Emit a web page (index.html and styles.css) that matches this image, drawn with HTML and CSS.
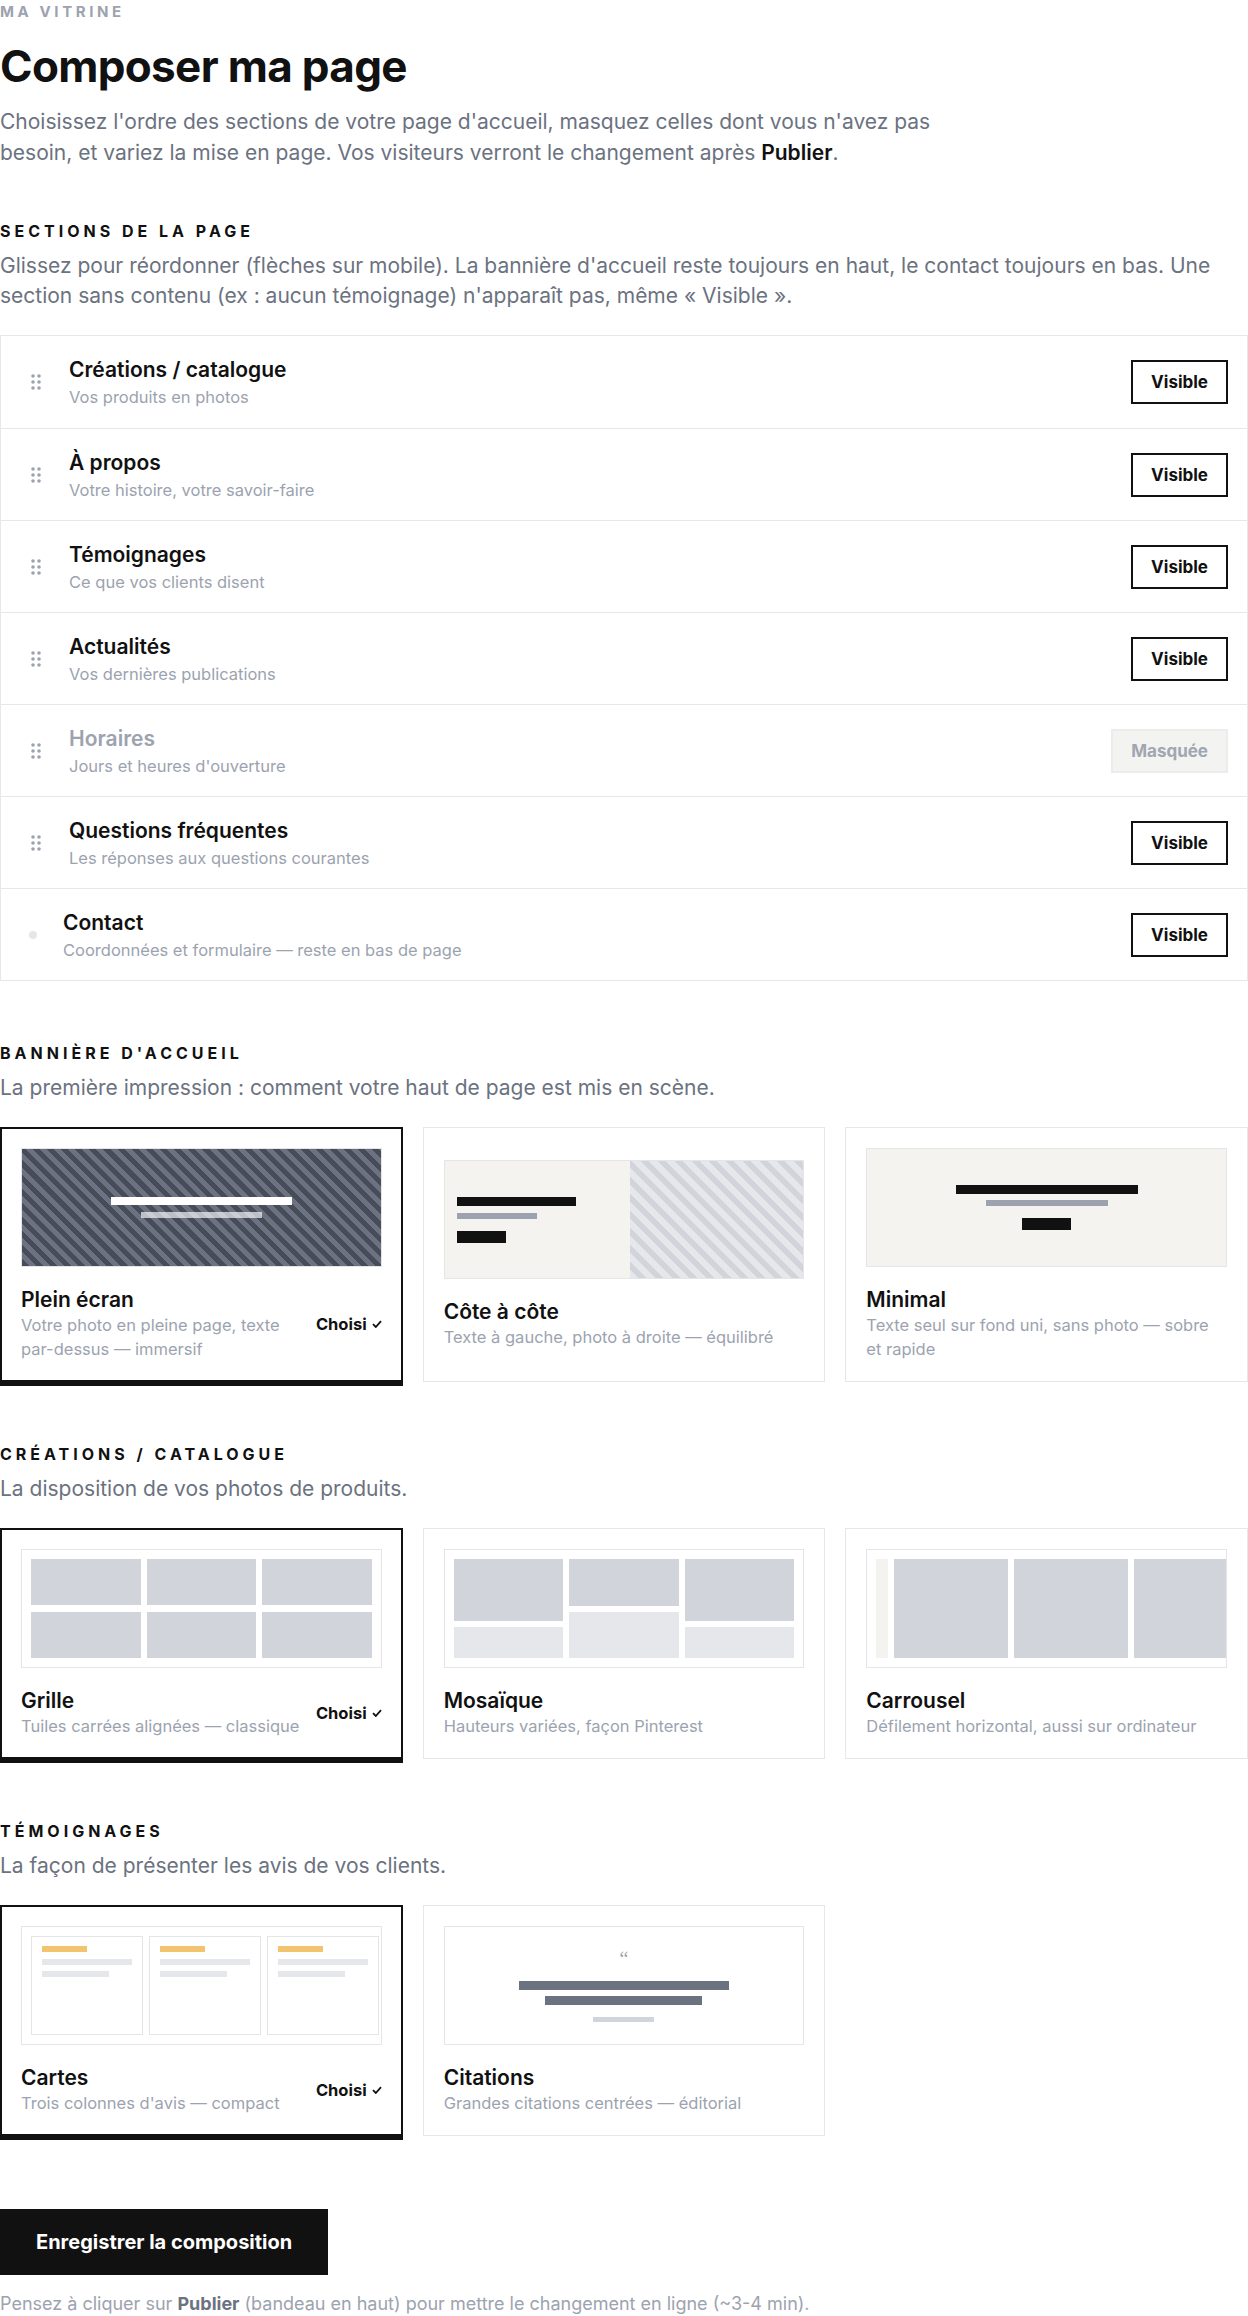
FILE: index.html
```html
<!DOCTYPE html>
<html lang="fr">
<head>
    <meta charset="UTF-8">
    <meta name="viewport" content="width=device-width, initial-scale=1.0">
    <title>Composer ma page</title>
    <link rel="stylesheet" href="styles.css">
</head>
<body>
<main class="page">

    <p class="eyebrow">Ma vitrine</p>
    <h1 class="title">Composer ma page</h1>
    <p class="intro">Choisissez l'ordre des sections de votre page d'accueil, masquez celles dont vous n'avez pas besoin, et variez la mise en page. Vos visiteurs verront le changement après <strong>Publier</strong>.</p>

    <!-- Ordre des sections -->
    <section class="block block-first">
        <h2 class="block-title">Sections de la page</h2>
        <p class="block-desc">Glissez pour réordonner (flèches sur mobile). La bannière d'accueil reste toujours en haut, le contact toujours en bas. Une section sans contenu (ex : aucun témoignage) n'apparaît pas, même « Visible ».</p>

        <ul class="section-list">
            <li class="section-row">
                <svg class="handle" viewBox="0 0 10 16"><circle cx="2" cy="2" r="1.8"/><circle cx="8" cy="2" r="1.8"/><circle cx="2" cy="8" r="1.8"/><circle cx="8" cy="8" r="1.8"/><circle cx="2" cy="14" r="1.8"/><circle cx="8" cy="14" r="1.8"/></svg>
                <div class="section-text">
                    <span class="section-name">Créations / catalogue</span>
                    <span class="section-sub">Vos produits en photos</span>
                </div>
                <button class="toggle">Visible</button>
            </li>
            <li class="section-row">
                <svg class="handle" viewBox="0 0 10 16"><circle cx="2" cy="2" r="1.8"/><circle cx="8" cy="2" r="1.8"/><circle cx="2" cy="8" r="1.8"/><circle cx="8" cy="8" r="1.8"/><circle cx="2" cy="14" r="1.8"/><circle cx="8" cy="14" r="1.8"/></svg>
                <div class="section-text">
                    <span class="section-name">À propos</span>
                    <span class="section-sub">Votre histoire, votre savoir-faire</span>
                </div>
                <button class="toggle">Visible</button>
            </li>
            <li class="section-row">
                <svg class="handle" viewBox="0 0 10 16"><circle cx="2" cy="2" r="1.8"/><circle cx="8" cy="2" r="1.8"/><circle cx="2" cy="8" r="1.8"/><circle cx="8" cy="8" r="1.8"/><circle cx="2" cy="14" r="1.8"/><circle cx="8" cy="14" r="1.8"/></svg>
                <div class="section-text">
                    <span class="section-name">Témoignages</span>
                    <span class="section-sub">Ce que vos clients disent</span>
                </div>
                <button class="toggle">Visible</button>
            </li>
            <li class="section-row">
                <svg class="handle" viewBox="0 0 10 16"><circle cx="2" cy="2" r="1.8"/><circle cx="8" cy="2" r="1.8"/><circle cx="2" cy="8" r="1.8"/><circle cx="8" cy="8" r="1.8"/><circle cx="2" cy="14" r="1.8"/><circle cx="8" cy="14" r="1.8"/></svg>
                <div class="section-text">
                    <span class="section-name">Actualités</span>
                    <span class="section-sub">Vos dernières publications</span>
                </div>
                <button class="toggle">Visible</button>
            </li>
            <li class="section-row is-hidden">
                <svg class="handle" viewBox="0 0 10 16"><circle cx="2" cy="2" r="1.8"/><circle cx="8" cy="2" r="1.8"/><circle cx="2" cy="8" r="1.8"/><circle cx="8" cy="8" r="1.8"/><circle cx="2" cy="14" r="1.8"/><circle cx="8" cy="14" r="1.8"/></svg>
                <div class="section-text">
                    <span class="section-name">Horaires</span>
                    <span class="section-sub">Jours et heures d'ouverture</span>
                </div>
                <button class="toggle toggle-off">Masquée</button>
            </li>
            <li class="section-row">
                <svg class="handle" viewBox="0 0 10 16"><circle cx="2" cy="2" r="1.8"/><circle cx="8" cy="2" r="1.8"/><circle cx="2" cy="8" r="1.8"/><circle cx="8" cy="8" r="1.8"/><circle cx="2" cy="14" r="1.8"/><circle cx="8" cy="14" r="1.8"/></svg>
                <div class="section-text">
                    <span class="section-name">Questions fréquentes</span>
                    <span class="section-sub">Les réponses aux questions courantes</span>
                </div>
                <button class="toggle">Visible</button>
            </li>
            <li class="section-row is-fixed">
                <span class="fixed-dot"></span>
                <div class="section-text">
                    <span class="section-name">Contact</span>
                    <span class="section-sub">Coordonnées et formulaire — reste en bas de page</span>
                </div>
                <button class="toggle">Visible</button>
            </li>
        </ul>
    </section>

    <!-- Bannière -->
    <section class="block">
        <h2 class="block-title">Bannière d'accueil</h2>
        <p class="block-desc">La première impression : comment votre haut de page est mis en scène.</p>

        <div class="options">
            <button class="option is-chosen">
                <div class="preview preview-full">
                    <span class="bar bar-white"></span>
                    <span class="bar bar-white-soft"></span>
                </div>
                <div class="option-info">
                    <div class="option-text">
                        <span class="option-name">Plein écran</span>
                        <span class="option-desc">Votre photo en pleine page, texte par-dessus — immersif</span>
                    </div>
                    <span class="chosen">Choisi <svg viewBox="0 0 10 8"><path d="M1 4.2 3.8 7 9 1.2"/></svg></span>
                </div>
            </button>

            <button class="option">
                <div class="preview preview-split">
                    <div class="split-text">
                        <span class="bar bar-dark bar-long"></span>
                        <span class="bar bar-grey bar-mid"></span>
                        <span class="bar-block"></span>
                    </div>
                    <div class="split-photo"></div>
                </div>
                <div class="option-info">
                    <div class="option-text">
                        <span class="option-name">Côte à côte</span>
                        <span class="option-desc">Texte à gauche, photo à droite — équilibré</span>
                    </div>
                </div>
            </button>

            <button class="option">
                <div class="preview preview-minimal">
                    <span class="bar bar-dark bar-wide"></span>
                    <span class="bar bar-grey bar-mid2"></span>
                    <span class="bar-block"></span>
                </div>
                <div class="option-info">
                    <div class="option-text">
                        <span class="option-name">Minimal</span>
                        <span class="option-desc">Texte seul sur fond uni, sans photo — sobre et rapide</span>
                    </div>
                </div>
            </button>
        </div>
    </section>

    <!-- Catalogue -->
    <section class="block">
        <h2 class="block-title">Créations / catalogue</h2>
        <p class="block-desc">La disposition de vos photos de produits.</p>

        <div class="options">
            <button class="option is-chosen">
                <div class="preview preview-grid">
                    <span class="tile"></span><span class="tile"></span><span class="tile"></span>
                    <span class="tile"></span><span class="tile"></span><span class="tile"></span>
                </div>
                <div class="option-info">
                    <div class="option-text">
                        <span class="option-name">Grille</span>
                        <span class="option-desc">Tuiles carrées alignées — classique</span>
                    </div>
                    <span class="chosen">Choisi <svg viewBox="0 0 10 8"><path d="M1 4.2 3.8 7 9 1.2"/></svg></span>
                </div>
            </button>

            <button class="option">
                <div class="preview preview-masonry">
                    <div class="mcol"><span class="tile tall"></span><span class="tile light"></span></div>
                    <div class="mcol"><span class="tile"></span><span class="tile light"></span></div>
                    <div class="mcol"><span class="tile tall"></span><span class="tile light"></span></div>
                </div>
                <div class="option-info">
                    <div class="option-text">
                        <span class="option-name">Mosaïque</span>
                        <span class="option-desc">Hauteurs variées, façon Pinterest</span>
                    </div>
                </div>
            </button>

            <button class="option">
                <div class="preview preview-carousel">
                    <span class="peek"></span>
                    <span class="tile"></span><span class="tile"></span><span class="tile"></span>
                </div>
                <div class="option-info">
                    <div class="option-text">
                        <span class="option-name">Carrousel</span>
                        <span class="option-desc">Défilement horizontal, aussi sur ordinateur</span>
                    </div>
                </div>
            </button>
        </div>
    </section>

    <!-- Témoignages -->
    <section class="block">
        <h2 class="block-title">Témoignages</h2>
        <p class="block-desc">La façon de présenter les avis de vos clients.</p>

        <div class="options">
            <button class="option is-chosen">
                <div class="preview preview-cards">
                    <div class="mini"><span class="star"></span><span class="line"></span><span class="line short"></span></div>
                    <div class="mini"><span class="star"></span><span class="line"></span><span class="line short"></span></div>
                    <div class="mini"><span class="star"></span><span class="line"></span><span class="line short"></span></div>
                </div>
                <div class="option-info">
                    <div class="option-text">
                        <span class="option-name">Cartes</span>
                        <span class="option-desc">Trois colonnes d'avis — compact</span>
                    </div>
                    <span class="chosen">Choisi <svg viewBox="0 0 10 8"><path d="M1 4.2 3.8 7 9 1.2"/></svg></span>
                </div>
            </button>

            <button class="option">
                <div class="preview preview-quote">
                    <span class="quote-mark">&ldquo;</span>
                    <span class="qbar qbar-1"></span>
                    <span class="qbar qbar-2"></span>
                    <span class="qbar qbar-3"></span>
                </div>
                <div class="option-info">
                    <div class="option-text">
                        <span class="option-name">Citations</span>
                        <span class="option-desc">Grandes citations centrées — éditorial</span>
                    </div>
                </div>
            </button>
        </div>
    </section>

    <div class="save">
        <button class="save-btn">Enregistrer la composition</button>
        <p class="save-note">Pensez à cliquer sur <strong>Publier</strong> (bandeau en haut) pour mettre le changement en ligne (~3-4 min).</p>
    </div>

</main>
</body>
</html>
```

FILE: styles.css
```css
/* Base */

* {
    box-sizing: border-box;
}

body {
    margin: 0;
    font-family: Inter, "Liberation Sans", sans-serif;
    color: #111;
    background-color: #fff;
}

button {
    font-family: inherit;
    cursor: pointer;
}

.eyebrow {
    margin: 0;
    font-size: 15px;
    line-height: 24px;
    font-weight: 700;
    letter-spacing: 0.24em;
    text-transform: uppercase;
    color: #9ca3af;
}

.title {
    margin: 18px 0 0;
    font-size: 44px;
    line-height: 48px;
    font-weight: 700;
    letter-spacing: -0.015em;
}

.intro {
    margin: 16px 0 0;
    max-width: 960px;
    font-size: 21px;
    line-height: 31px;
    color: #6b7280;
}

.intro strong {
    color: #111;
    font-weight: 600;
}

/* Blocs */

.block {
    margin-top: 62px;
}

.block-first {
    margin-top: 53px;
}

.block-title {
    margin: 0;
    font-size: 16px;
    line-height: 20px;
    font-weight: 700;
    letter-spacing: 0.25em;
    text-transform: uppercase;
}

.block-desc {
    margin: 10px 0 24px;
    font-size: 21px;
    line-height: 30px;
    color: #6b7280;
}

/* Liste des sections */

.section-list {
    list-style: none;
    margin: 0;
    padding: 0;
    border: 1px solid #e7e7e7;
}

.section-row {
    display: flex;
    align-items: center;
    gap: 28px;
    height: 92px;
    padding: 0 19px 0 30px;
    border-top: 1px solid #e7e7e7;
}

.section-row:first-child {
    border-top: none;
}

.handle {
    width: 10px;
    height: 16px;
    flex: none;
    fill: #9ca3af;
}

.fixed-dot {
    width: 8px;
    height: 8px;
    flex: none;
    border-radius: 50%;
    background-color: #e5e7eb;
}

.section-row.is-fixed {
    gap: 26px;
    padding-left: 28px;
}

.section-text {
    flex: 1;
    display: flex;
    flex-direction: column;
}

.section-name {
    font-size: 21px;
    line-height: 27px;
    font-weight: 600;
}

.section-sub {
    margin-top: 3px;
    font-size: 16.5px;
    line-height: 22px;
    color: #9ca3af;
}

.is-hidden .section-name {
    color: #9ca3af;
}

.toggle {
    height: 44px;
    padding: 0 18px;
    border: 2px solid #111;
    background-color: #fff;
    color: #111;
    font-size: 17px;
    font-weight: 700;
}

.toggle-off {
    border-color: #ececea;
    background-color: #f3f3f1;
    color: #a1a6b0;
}

/* Cartes d'options */

.options {
    display: grid;
    grid-template-columns: repeat(3, minmax(0, 1fr));
    gap: 20px;
}

.option {
    display: flex;
    flex-direction: column;
    justify-content: center;
    min-width: 0;
    padding: 20px;
    border: 1px solid #e7e7e7;
    background-color: #fff;
    color: #111;
    text-align: left;
}

.option.is-chosen {
    border: 2px solid #111;
    padding: 19px;
    box-shadow: 0 4px 0 #111;
}

.preview {
    height: 119px;
    border: 1px solid #e5e5e5;
    background-color: #fff;
    overflow: hidden;
}

.option-info {
    display: flex;
    align-items: center;
    gap: 16px;
    margin-top: 20px;
}

.option-text {
    flex: 1;
    display: flex;
    flex-direction: column;
}

.option-name {
    font-size: 21px;
    line-height: 26px;
    font-weight: 600;
}

.option-desc {
    max-width: 345px;
    font-size: 16.5px;
    line-height: 24px;
    color: #9ca3af;
}

.chosen {
    display: flex;
    align-items: center;
    gap: 5px;
    font-size: 16.5px;
    font-weight: 700;
    white-space: nowrap;
}

.chosen svg {
    width: 10px;
    height: 8px;
    fill: none;
    stroke: #111;
    stroke-width: 1.8;
}

/* Aperçus bannière */

.bar {
    display: block;
}

.bar-block {
    display: block;
    width: 49px;
    height: 12px;
    margin-top: 12px;
    background-color: #111;
}

.preview-full {
    display: flex;
    flex-direction: column;
    align-items: center;
    justify-content: center;
    background: repeating-linear-gradient(45deg, #474c59 0 5px, #6d7282 5px 10px);
}

.bar-white {
    width: 181px;
    height: 8px;
    background-color: #fff;
}

.bar-white-soft {
    width: 121px;
    height: 6px;
    margin-top: 7px;
    background-color: rgba(255, 255, 255, 0.65);
}

.preview-split {
    display: flex;
}

.split-text {
    flex: 1;
    display: flex;
    flex-direction: column;
    justify-content: center;
    padding-left: 12px;
    background-color: #f4f3f0;
}

.split-photo {
    flex: 1;
    background: repeating-linear-gradient(45deg, #e5e7eb 0 6px, #d1d5db 6px 12px);
}

.bar-dark {
    height: 9px;
    background-color: #111;
}

.bar-grey {
    height: 6px;
    margin-top: 7px;
    background-color: #9ca3af;
}

.bar-long {
    width: 119px;
}

.bar-mid {
    width: 80px;
}

.preview-minimal {
    display: flex;
    flex-direction: column;
    align-items: center;
    justify-content: center;
    background-color: #f4f3f0;
}

.bar-wide {
    width: 182px;
}

.bar-mid2 {
    width: 122px;
    margin-top: 6px;
}

/* Aperçus catalogue */

.tile {
    display: block;
    background-color: #d1d5db;
}

.tile.light {
    background-color: #e5e7eb;
}

.preview-grid {
    display: grid;
    grid-template-columns: repeat(3, 1fr);
    grid-template-rows: 1fr 1fr;
    gap: 7px 6px;
    padding: 9px;
}

.preview-masonry {
    display: flex;
    gap: 6px;
    padding: 9px;
}

.mcol {
    flex: 1;
    display: flex;
    flex-direction: column;
    gap: 6px;
}

.mcol .tile {
    flex: 1;
}

.mcol .tile.tall {
    flex: 2;
}

.preview-carousel {
    display: flex;
    gap: 6px;
    padding: 9px 0 9px 9px;
}

.preview-carousel .peek {
    width: 12px;
    flex: none;
    background-color: #f4f3f0;
}

.preview-carousel .tile {
    width: 114px;
    flex: none;
}

/* Aperçus témoignages */

.preview-cards {
    display: flex;
    gap: 6px;
    padding: 9px;
}

.mini {
    flex: 1;
    padding: 9px 10px;
    border: 1px solid #e5e5e5;
}

.mini span {
    display: block;
    height: 6px;
}

.mini .star {
    width: 45px;
    background-color: #f2c46f;
}

.mini .line {
    width: 90px;
    margin-top: 7px;
    background-color: #e5e7eb;
}

.mini .line.short {
    width: 67px;
    margin-top: 6px;
}

.preview-quote {
    display: flex;
    flex-direction: column;
    align-items: center;
    justify-content: center;
}

.quote-mark {
    height: 20px;
    margin-bottom: 12px;
    font-family: "Liberation Serif", serif;
    font-size: 20px;
    line-height: 20px;
    color: #9ca3af;
}

.qbar {
    display: block;
    height: 9px;
    background-color: #6b7280;
}

.qbar-1 {
    width: 210px;
}

.qbar-2 {
    width: 157px;
    margin-top: 6px;
}

.qbar-3 {
    width: 61px;
    height: 5px;
    margin-top: 12px;
    background-color: #d1d5db;
}

/* Enregistrer */

.save {
    margin-top: 73px;
}

.save-btn {
    height: 66px;
    padding: 0 36px;
    border: none;
    background-color: #111;
    color: #fff;
    font-size: 20px;
    font-weight: 700;
}

.save-note {
    margin: 17px 0 0;
    font-size: 18px;
    line-height: 24px;
    color: #9ca3af;
}

.save-note strong {
    color: #6b7280;
    font-weight: 700;
}
```
